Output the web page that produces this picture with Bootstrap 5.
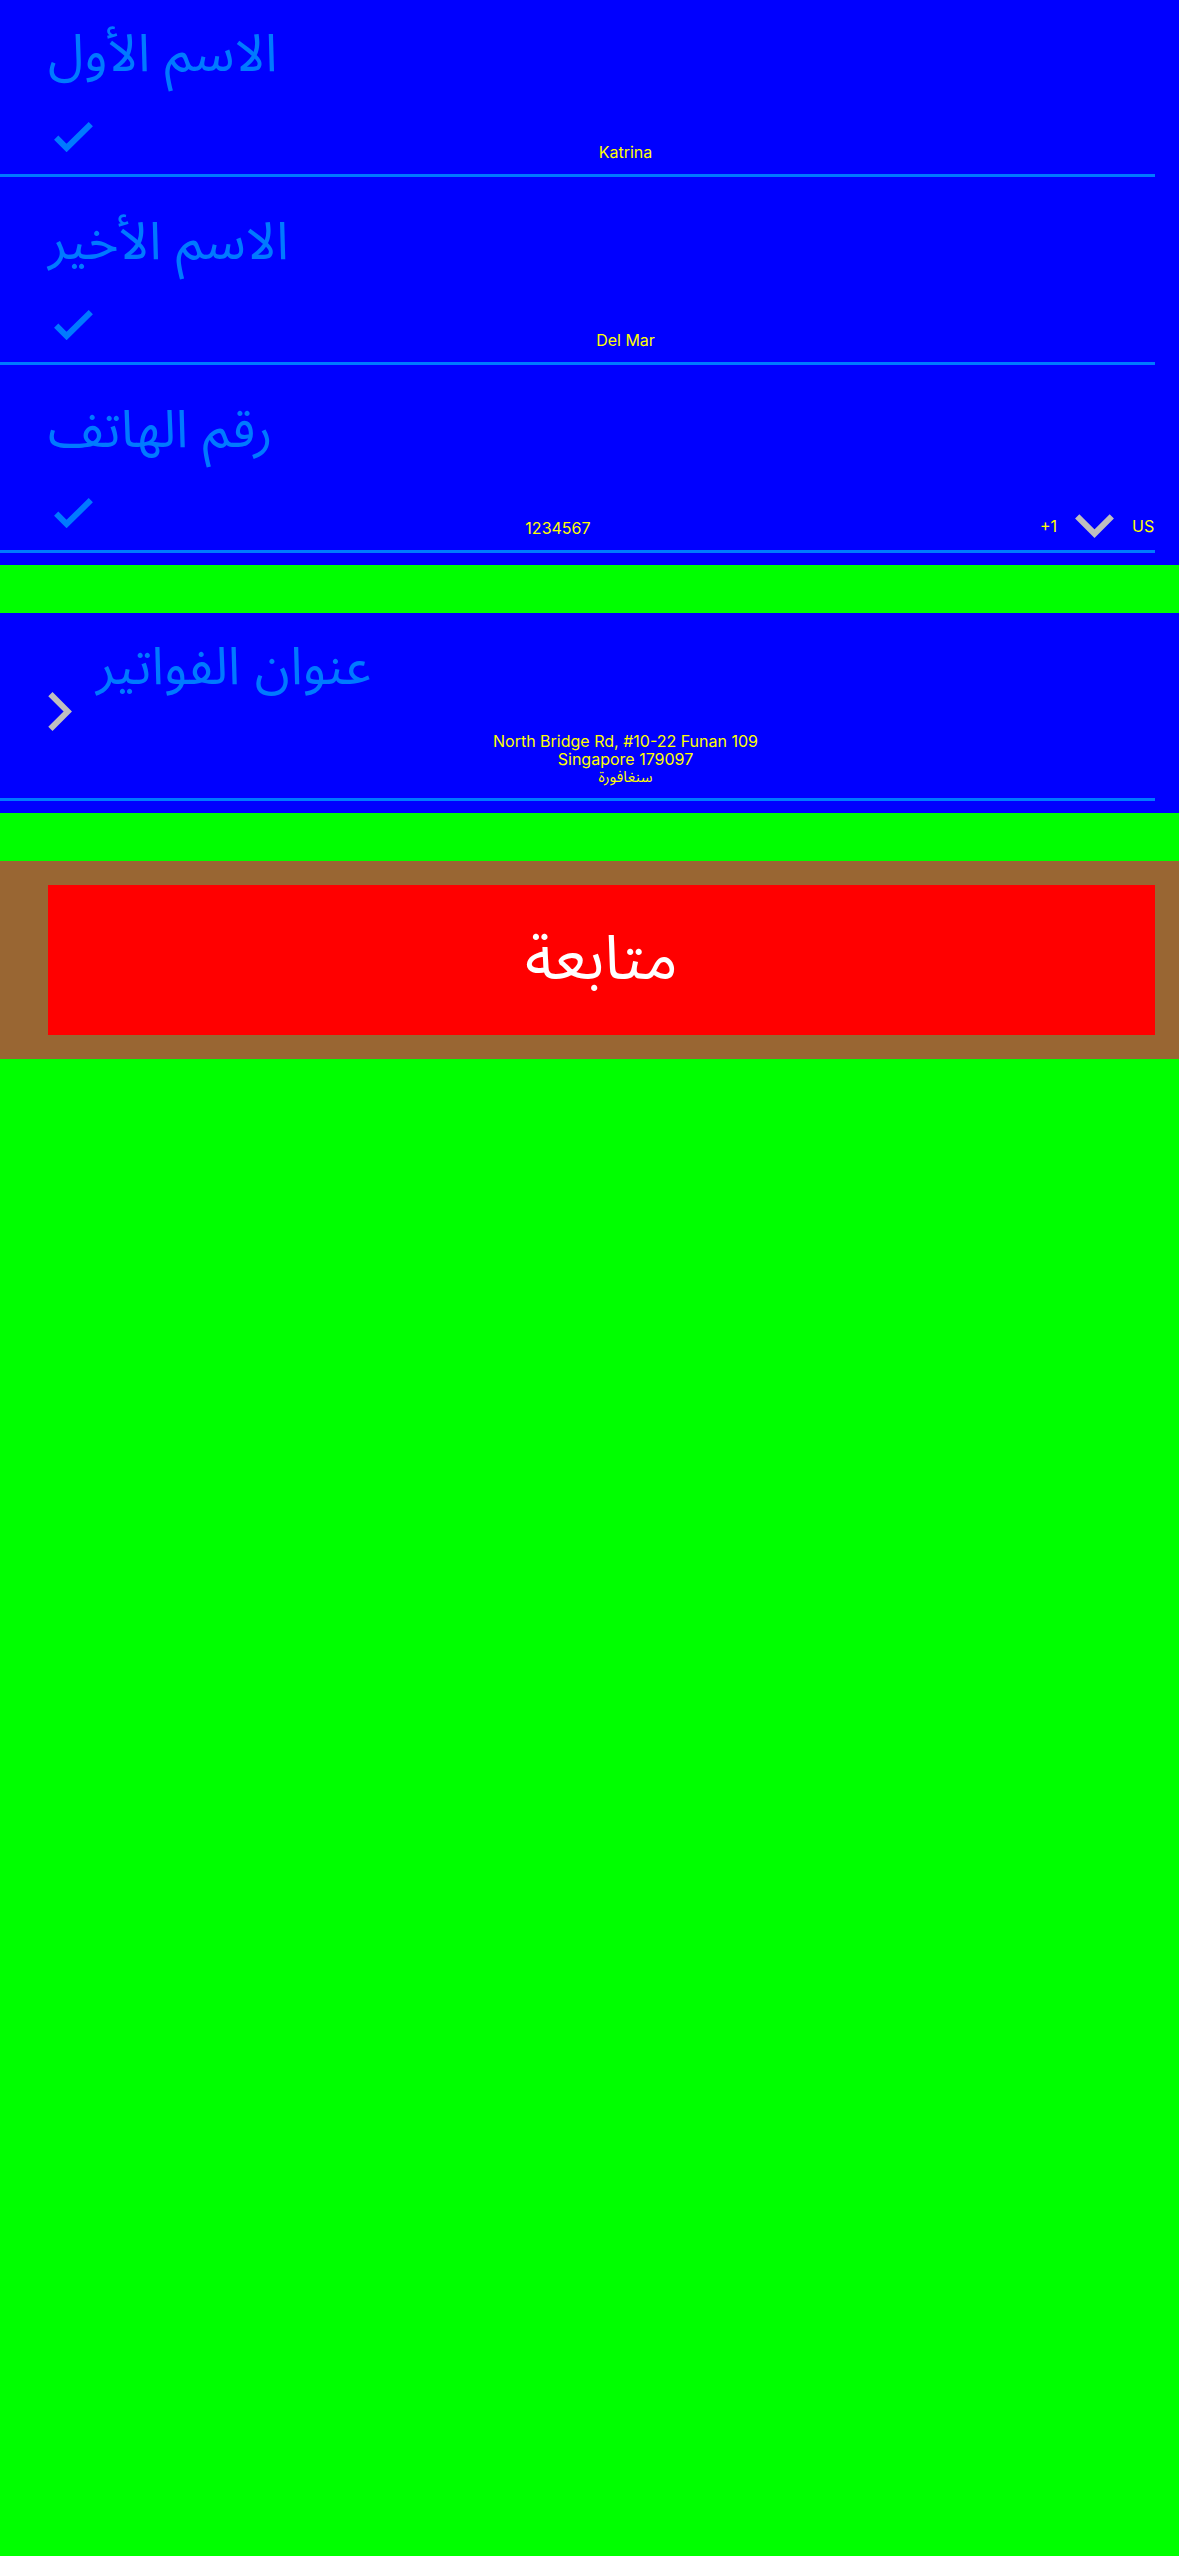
<!DOCTYPE html>
<html lang="ar">
<head>
<meta charset="utf-8">
<meta name="viewport" content="width=device-width, initial-scale=1">
<title>عنوان الفواتير</title>
<link href="https://cdn.jsdelivr.net/npm/bootstrap@5.3.0/dist/css/bootstrap.min.css" rel="stylesheet">
<style>
  body { background: #0f0; font-family: Inter, "Noto Sans Arabic", "DejaVu Sans", sans-serif; font-size: 16px; line-height: 18px; color: #ff0; }
  .panel { background: #00f; padding: 0 24px 12px 0; margin-bottom: 48px; }
  .entry { border-bottom: 3px solid #007aff; padding-left: 48px; }
  .entry + .entry { margin-top: 11px; }
  .entry-label { color: #007aff; font-size: 52px; line-height: 72px; padding-top: 17px; height: 111px; direction: rtl; }
  .entry-line { height: 63px; padding-top: 11px; }
  .icon-col { width: 48px; flex: none; }
  .tick { display: block; margin-left: 6px; }
  .entry-input { background: none; border: 0; padding: 0; height: 18px; color: #ff0; text-align: center; min-width: 0; outline-offset: 4px; margin-top: 21px; }
  .dial { gap: 18px; margin: 16px 0 0 20px; }
  .country { appearance: none; background: none; border: 0; padding: 0; color: #ff0; height: 18px; }
  .address { min-height: 74px; padding-bottom: 12px; }
  .place-ar { font-size: 15px; }
  .arrow { padding-top: 12px; }
  .footer-bar { background: #963; padding: 24px 24px 24px 48px; }
  .btn-continue { background: #f00; color: #fff; border-radius: 0; border: 0; height: 150px; font-size: 62px; line-height: 80px; padding: 0 0 6px; }
  .btn-continue:hover { background: #d00; color: #fff; }
</style>
</head>
<body>
<form>
  <section class="panel">
    <div class="entry">
      <div class="d-flex"><label class="entry-label" for="first">الاسم الأول</label></div>
      <div class="entry-line d-flex align-items-start">
        <div class="icon-col"><svg class="tick" width="39" height="30" viewBox="0 0 39 30" aria-hidden="true"><path d="M2.2 15.6 12.6 26 36.8 2.2" fill="none" stroke="#007aff" stroke-width="6"/></svg></div>
        <input class="entry-input flex-fill" id="first" type="text" value="Katrina">
      </div>
    </div>
    <div class="entry">
      <div class="d-flex"><label class="entry-label" for="last">الاسم الأخير</label></div>
      <div class="entry-line d-flex align-items-start">
        <div class="icon-col"><svg class="tick" width="39" height="30" viewBox="0 0 39 30" aria-hidden="true"><path d="M2.2 15.6 12.6 26 36.8 2.2" fill="none" stroke="#007aff" stroke-width="6"/></svg></div>
        <input class="entry-input flex-fill" id="last" type="text" value="Del Mar">
      </div>
    </div>
    <div class="entry">
      <div class="d-flex"><label class="entry-label" for="phone">رقم الهاتف</label></div>
      <div class="entry-line d-flex align-items-start">
        <div class="icon-col"><svg class="tick" width="39" height="30" viewBox="0 0 39 30" aria-hidden="true"><path d="M2.2 15.6 12.6 26 36.8 2.2" fill="none" stroke="#007aff" stroke-width="6"/></svg></div>
        <input class="entry-input flex-fill" id="phone" type="tel" value="1234567">
        <div class="dial d-flex align-items-center flex-shrink-0">
          <span>+1</span>
          <svg width="39" height="24" viewBox="0 0 39 24" aria-hidden="true"><path d="M2.2 2.4 19.5 19.7 36.8 2.4" fill="none" stroke="#bfbfbf" stroke-width="6"/></svg>
          <select class="country" aria-label="رمز البلد"><option>US</option></select>
        </div>
      </div>
    </div>
  </section>

  <section class="panel">
    <div class="entry d-flex">
      <div class="icon-col arrow d-flex align-items-center">
        <svg width="24" height="39" viewBox="0 0 24 39" aria-hidden="true"><path d="M2.4 2.2 19.7 19.5 2.4 36.8" fill="none" stroke="#bfbfbf" stroke-width="6"/></svg>
      </div>
      <div class="flex-fill">
        <div class="d-flex"><div class="entry-label">عنوان الفواتير</div></div>
        <address class="address text-center mb-0 d-flex flex-column justify-content-end">
          <span>North Bridge Rd, #10-22 Funan 109</span>
          <span>Singapore 179097</span>
          <span class="place-ar">سنغافورة</span>
        </address>
      </div>
    </div>
  </section>

  <div class="footer-bar">
    <button class="btn btn-continue w-100" type="submit">متابعة</button>
  </div>
</form>
<script src="https://cdn.jsdelivr.net/npm/bootstrap@5.3.0/dist/js/bootstrap.bundle.min.js"></script>
</body>
</html>
